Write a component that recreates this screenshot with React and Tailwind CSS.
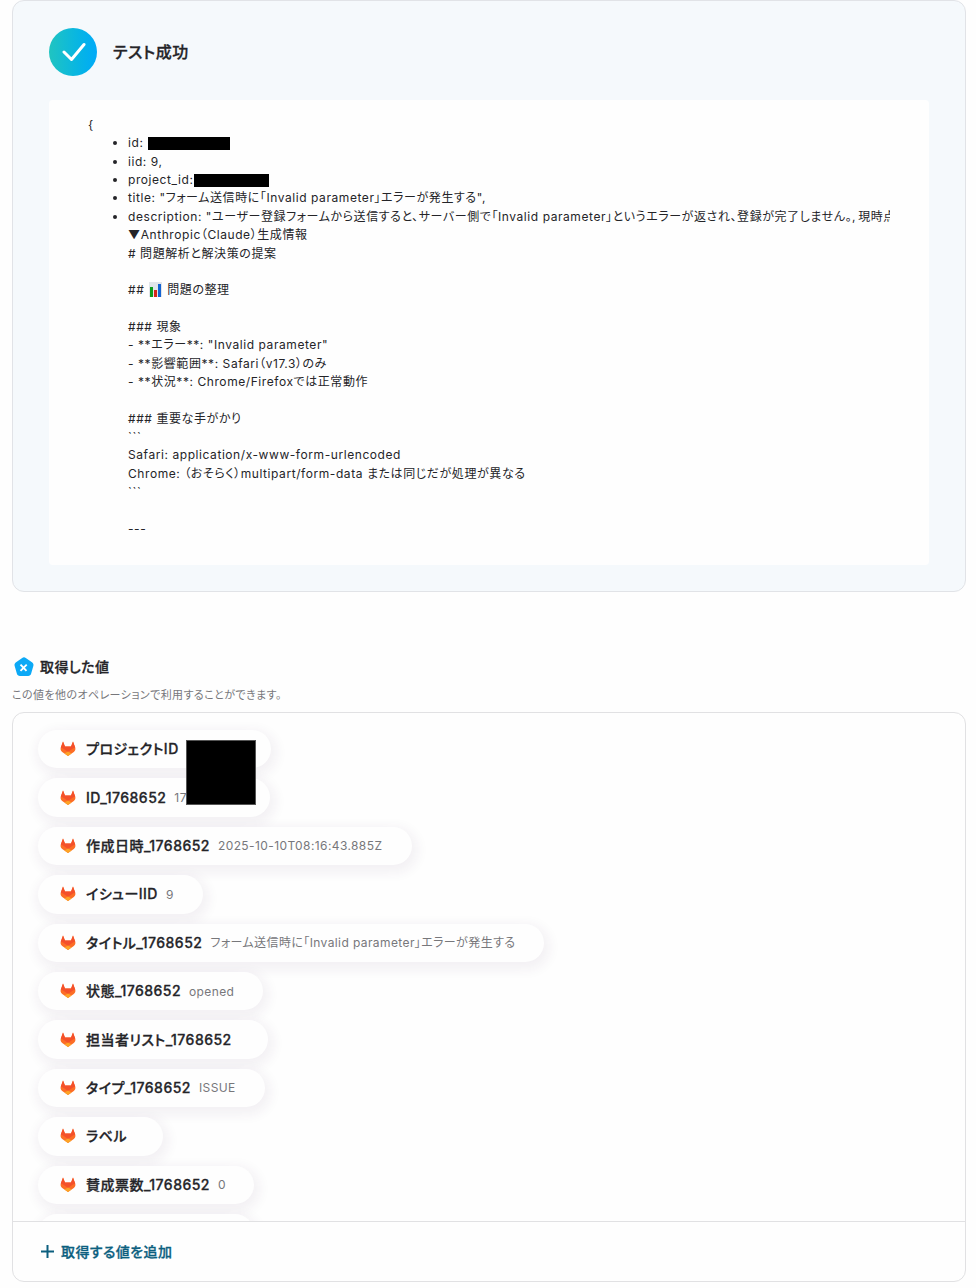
import { Fragment } from 'react';

const bodyLines = [
  '▼Anthropic（Claude）生成情報',
  '# 問題解析と解決策の提案',
  '',
  '## 📊 問題の整理',
  '',
  '### 現象',
  '- **エラー**: "Invalid parameter"',
  '- **影響範囲**: Safari（v17.3）のみ',
  '- **状況**: Chrome/Firefoxでは正常動作',
  '',
  '### 重要な手がかり',
  '```',
  'Safari: application/x-www-form-urlencoded',
  'Chrome: （おそらく）multipart/form-data または同じだが処理が異なる',
  '```',
  '',
  '---',
];

const values = [
  { label: 'プロジェクトID', width: 'w-[233px]' },
  { label: 'ID_1768652', value: '17', width: 'w-[232px]' },
  { label: '作成日時_1768652', value: '2025-10-10T08:16:43.885Z', width: 'w-[374px]' },
  { label: 'イシューIID', value: '9', width: 'w-[165px]' },
  {
    label: 'タイトル_1768652',
    value: 'フォーム送信時に「Invalid parameter」エラーが発生する',
    width: 'w-[506px]',
  },
  { label: '状態_1768652', value: 'opened', width: 'w-[225px]' },
  { label: '担当者リスト_1768652', width: 'w-[230px]' },
  { label: 'タイプ_1768652', value: 'ISSUE', width: 'w-[227px]' },
  { label: 'ラベル', width: 'w-[125px]' },
  { label: '賛成票数_1768652', value: '0', width: 'w-[216px]' },
];

function ChartIcon() {
  return (
    <svg viewBox="0 0 13 15" className="mr-px ml-px inline-block h-[15px] w-[13px] align-[-3px]">
      <rect width="13" height="15" fill="#e1e5ea" />
      <rect x="1" y="5" width="3" height="10" fill="#0d9b1c" />
      <rect x="5" y="8" width="3" height="7" fill="#d5271b" />
      <rect x="9" y="2" width="3" height="13" fill="#1463d2" />
    </svg>
  );
}

function GitlabIcon() {
  return (
    <svg viewBox="0 0 16 15" className="-mt-px h-[15px] w-4 shrink-0">
      <path
        d="M3 .5 5 5.500h6L13 .5l2.200 6c.6 1.700 0 3.400-1.400 4.500L8 15l-5.800-4C.8 9.900.2 8.200.8 6.500z"
        fill="#fc6d26"
      />
      <path d="M3 .5 5 5.500h6L13 .5l2.200 6-2.700 1.200L8 11 3.500 7.700.8 6.500z" fill="#f4502a" />
      <path d="M8 10.500 4.400 12.600 8 15l3.600-2.400z" fill="#fca326" />
    </svg>
  );
}

function VariableIcon() {
  return (
    <svg viewBox="0 0 20 20" className="h-5 w-5 shrink-0">
      <path
        d="M8.200.9c1.100-.8 2.500-.8 3.600 0l6.500 4.600c1 .7 1.400 2 1.100 3.200l-2.300 8c-.4 1.300-1.500 2.200-2.900 2.200H5.800c-1.400 0-2.500-.9-2.900-2.200l-2.300-8c-.3-1.200.1-2.500 1.100-3.200z"
        fill="#0ca9f6"
      />
      <path d="m6.500 7.700 6 6.200M12.700 7.700l-6.200 6.200" stroke="#fff" strokeWidth="1.900" />
    </svg>
  );
}

function TestResult() {
  return (
    <section className="h-[592px] rounded-xl border border-[#e1e3e7] bg-[#f5f9fc] px-9 pt-[27px]">
      <div className="flex items-center gap-4">
        <div className="flex h-12 w-12 items-center justify-center rounded-full bg-gradient-to-r from-[#20c4c0] to-[#02aaf8]">
          <svg viewBox="0 0 24 20" className="ml-[2px] h-5 w-6" fill="none">
            <path
              d="M2 10 9.500 17.500 22 2.500"
              stroke="#fff"
              strokeWidth="3"
              strokeLinecap="round"
              strokeLinejoin="round"
            />
          </svg>
        </div>
        <h2 className="text-[16px] font-medium tracking-[0.5px] [-webkit-text-stroke:0.3px]">
          テスト成功
        </h2>
      </div>

      <div className="mt-6 h-[465px] rounded bg-[#fefefe] pt-4 pr-[39px] pl-[39px] text-[12px] leading-[18.36px] tracking-[0.57px]">
        <div className="overflow-hidden whitespace-nowrap">
          <div>{'{'}</div>
          <ul className="list-disc pl-10">
            <li>
              id: <span className="ml-px inline-block h-[13px] w-[82px] bg-black align-[-3px]" />
            </li>
            <li>iid: 9,</li>
            <li>
              project_id:
              <span className="ml-px inline-block h-[13px] w-[75px] bg-black align-[-3px]" />
            </li>
            <li>title: "フォーム送信時に「Invalid parameter」エラーが発生する",</li>
            <li>
              description:
              "ユーザー登録フォームから送信すると、サーバー側で「Invalid parameter」というエラーが返され、登録が完了しません。,
              <span className="ml-[2px]">現時点</span>
              {bodyLines.map((line, index) => {
                const parts = line.split('📊');
                return (
                  <div key={index} className="h-[18.36px] whitespace-pre">
                    {parts.map((part, i) => (
                      <Fragment key={i}>
                        {i > 0 && <ChartIcon />}
                        {part}
                      </Fragment>
                    ))}
                  </div>
                );
              })}
            </li>
          </ul>
        </div>
      </div>
    </section>
  );
}

function ValuePill({ label, value, width }) {
  return (
    <div
      className={`${width} flex h-[38.4px] shrink-0 items-center rounded-full bg-[#fefefe] pl-[22px] whitespace-nowrap shadow-[2px_4px_12px_4px_rgba(70,40,80,0.06)]`}
    >
      <GitlabIcon />
      <span className="-mt-px ml-[10px] text-[14px] font-medium tracking-[0.47px] [-webkit-text-stroke:0.3px]">
        {label}
      </span>
      {value && (
        <span className="mt-px ml-2 text-[12px] tracking-[0.4px] text-[#77777b]">{value}</span>
      )}
    </div>
  );
}

function App() {
  return (
    <div className="h-[1288px] overflow-hidden bg-[#fefefe] pr-[10px] pl-3 font-['Inter','Noto_Sans_CJK_JP',sans-serif] text-[#242428] [font-feature-settings:'palt']">
      <TestResult />

      <div className="mt-[65px] flex h-5 items-center gap-[6px] pl-[2px]">
        <VariableIcon />
        <h3 className="-mt-[2px] text-[14px] font-medium tracking-[0.45px] [-webkit-text-stroke:0.3px]">
          取得した値
        </h3>
      </div>
      <p className="mt-[9px] text-[11px] leading-[18px] tracking-[0.42px] text-[#77777b]">
        この値を他のオペレーションで利用することができます。
      </p>

      <section className="mt-2 h-[570px] overflow-hidden rounded-xl border border-[#e1e1e3]">
        <div className="relative h-[508px] overflow-hidden pt-[17px] pl-[25px]">
          <div className="flex flex-col items-start gap-[10px]">
            {values.map((item) => (
              <ValuePill key={item.label} {...item} />
            ))}
            {/* next pill peeks in above the footer */}
            <div className="h-[38.4px] w-[216px] shrink-0 rounded-full bg-[#fefefe] shadow-[2px_4px_12px_4px_rgba(70,40,80,0.06)]" />
          </div>
          {/* redacted ids */}
          <div className="absolute top-[27px] left-[173px] h-[65px] w-[70px] border border-[#555] bg-black" />
        </div>
        <button className="flex h-[61px] w-full items-center gap-[7px] border-t border-[#e1e1e3] pb-[2px] pl-7 text-[14px] font-medium tracking-[0.4px] text-[#0c5f7f] [-webkit-text-stroke:0.3px]">
          <svg viewBox="0 0 13 13" className="h-[13px] w-[13px]">
            <path d="M6.500 0v13M0 6.500h13" stroke="currentColor" strokeWidth="2" />
          </svg>
          取得する値を追加
        </button>
      </section>
    </div>
  );
}

export default App;
